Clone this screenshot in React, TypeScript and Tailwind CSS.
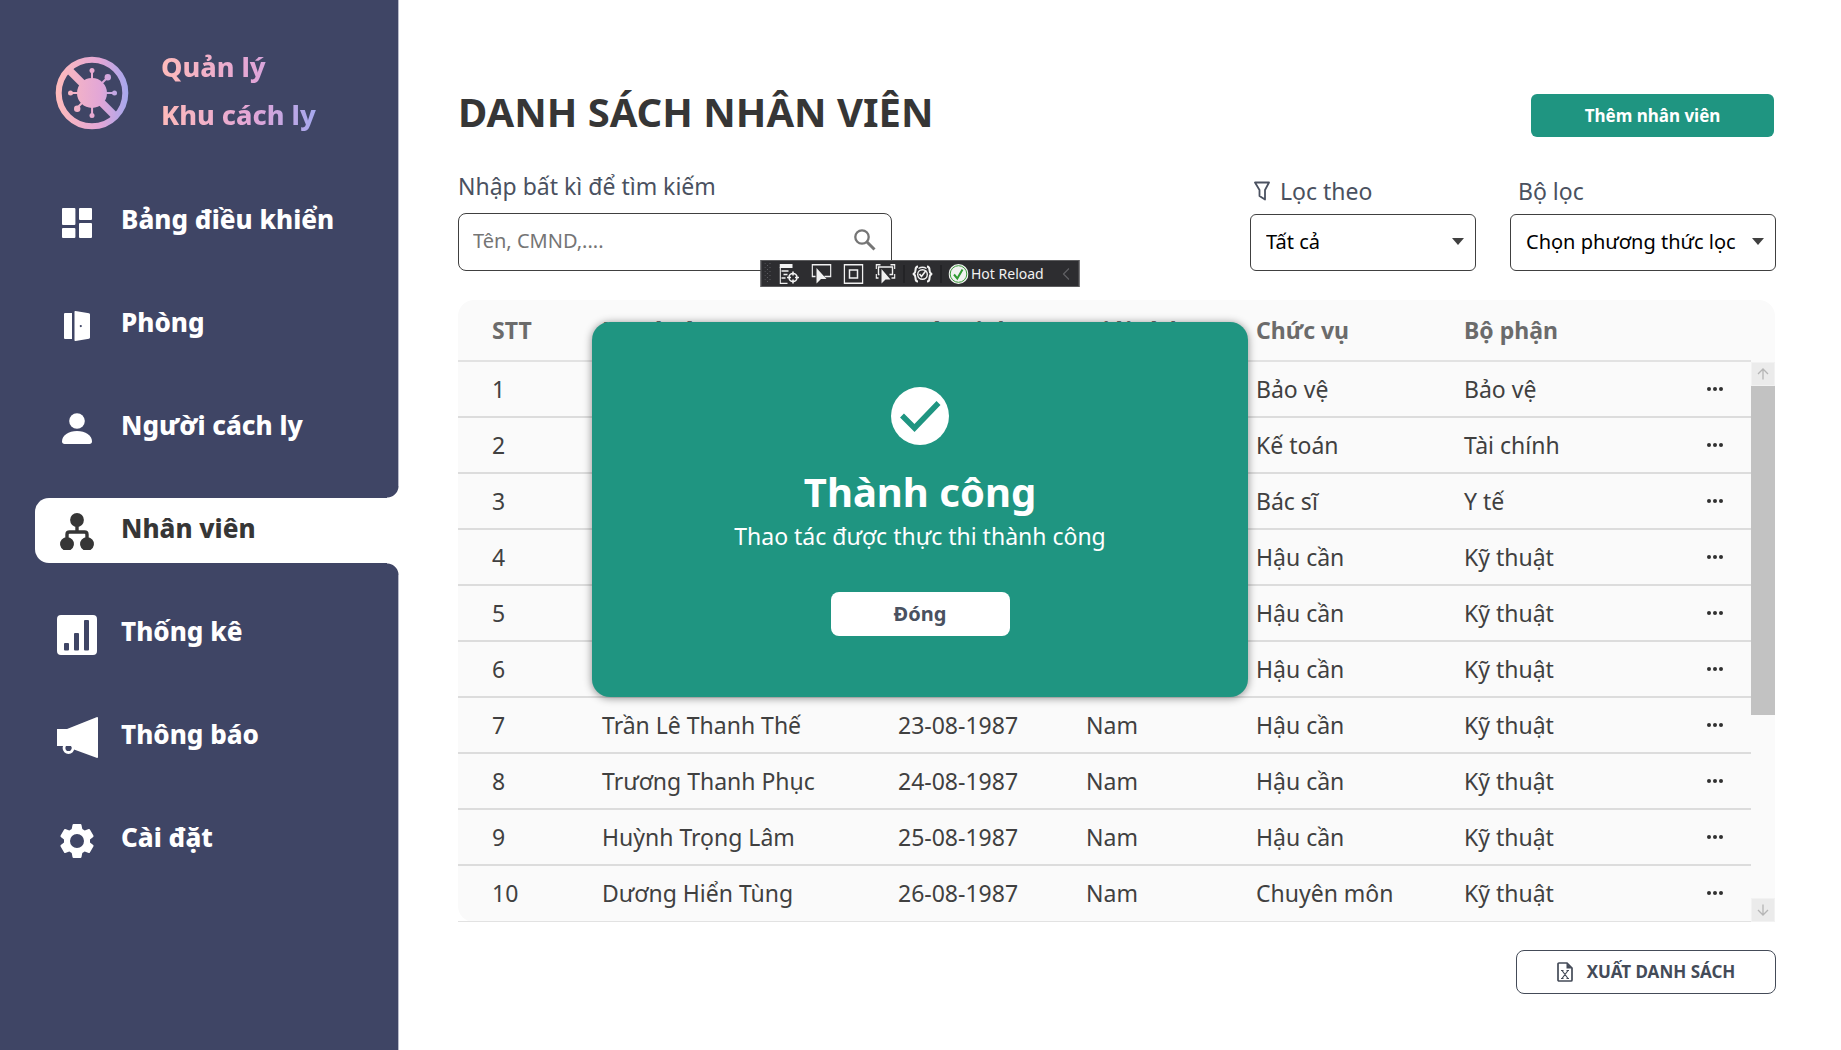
import React from 'react';

type IconProps = { className?: string };

const DashboardIcon = () => (
  <svg viewBox="0 0 30 30" className="h-[30px] w-[30px]" fill="currentColor" aria-hidden="true">
    <rect x="0" y="0" width="13.4" height="17" rx="1" />
    <rect x="17" y="0" width="13" height="12" rx="1" />
    <rect x="0" y="20" width="13.4" height="10" rx="1" />
    <rect x="17" y="15" width="13" height="15" rx="1" />
  </svg>
);

const DoorIcon = () => (
  <svg viewBox="0 0 26 30" className="h-[30px] w-[26px]" fill="currentColor" aria-hidden="true">
    <path d="M1 2h7v26H1a1 1 0 0 1-1-1V3a1 1 0 0 1 1-1z" />
    <path fillRule="evenodd" d="M10.5 0.8q0-.9 1-.7L25 2.3q1 .2 1 1.2v23q0 1-1 1.2L11.500 29.900q-1 .2-1-.7zM16.800 14a1.100 1.100 0 1 0 0 2.200a1.100 1.100 0 0 0 0-2.200z" />
  </svg>
);

const PersonIcon = () => (
  <svg viewBox="0 0 30 31" className="h-[31px] w-[30px]" fill="currentColor" aria-hidden="true">
    <circle cx="15" cy="8" r="7.800" />
    <path d="M15 18c8.500 0 15 4.500 15 10.500 0 1.500-1 2.500-2.500 2.500h-25C1 31 0 30 0 28.500 0 22.500 6.500 18 15 18z" />
  </svg>
);

const SitemapIcon = () => (
  <svg viewBox="0 0 34 37" className="h-[37px] w-[34px]" fill="currentColor" aria-hidden="true">
    <circle cx="17" cy="7" r="6.900" />
    <path d="M7 26v-4.500q0-2.500 2.500-2.500h15q2.500 0 2.500 2.500V26M17 12v7" fill="none" stroke="currentColor" strokeWidth="3.400" />
    <path d="M3.500 37a6.900 6.900 0 1 1 7 0zM23.500 37a6.900 6.900 0 1 1 7 0z" />
  </svg>
);

const ChartIcon = () => (
  <svg viewBox="0 0 40 40" className="h-10 w-10" fill="currentColor" aria-hidden="true">
    <path
      fillRule="evenodd"
      d="M4 0h32a4 4 0 0 1 4 4v32a4 4 0 0 1-4 4H4a4 4 0 0 1-4-4V4a4 4 0 0 1 4-4zM8 28a1 1 0 0 0-1 1v5.500a1 1 0 0 0 1 1h3a1 1 0 0 0 1-1V29a1 1 0 0 0-1-1zM18 18a1 1 0 0 0-1 1v15.500a1 1 0 0 0 1 1h3a1 1 0 0 0 1-1V19a1 1 0 0 0-1-1zM28 5a1 1 0 0 0-1 1v28.500a1 1 0 0 0 1 1h3a1 1 0 0 0 1-1V6a1 1 0 0 0-1-1z"
    />
  </svg>
);

const MegaphoneIcon = () => (
  <svg viewBox="0 0 41 41" className="h-[41px] w-[41px]" fill="currentColor" aria-hidden="true">
    <path d="M0 12h10L39.500.2Q41-.2 41 1v39q0 1.200-1.500.8L17 32.500 16 29H0z" />
    <circle cx="11.500" cy="31" r="4.500" fill="none" stroke="currentColor" strokeWidth="2.800" />
    <path d="M9.200 30.200h5.200a2.600 2.600 0 0 1-2.600 3q-2.200 0-2.600-3z" fill="#3f4565" />
  </svg>
);

const GearIcon = () => (
  <svg viewBox="0 0 34 34" className="h-[34px] w-[34px]" fill="currentColor" aria-hidden="true">
    <path
      fillRule="evenodd"
      d="M13.500 0h7q.8 0 1 .9l.8 4.200 2.400 1.400 4-1.400q.8-.3 1.200.5l3.500 6q.4.800-.2 1.300l-3.200 2.700v2.800l3.200 2.700q.6.500.2 1.300l-3.500 6q-.4.800-1.200.5l-4-1.400-2.400 1.400-.8 4.200q-.2.900-1 .9h-7q-.8 0-1-.9l-.8-4.200-2.400-1.400-4 1.400q-.8.300-1.200-.5l-3.500-6q-.4-.800.2-1.300L4 18.400v-2.800L.8 12.900Q.2 12.400.6 11.600l3.500-6q.4-.800 1.200-.5l4 1.400 2.400-1.400.8-4.200q.2-.9 1-.9zM17 10a7 7 0 1 0 0 14a7 7 0 0 0 0-14z"
    />
  </svg>
);

const LogoIcon = () => (
  <svg viewBox="-37 -37 74 74" className="h-[74px] w-[74px]" aria-hidden="true">
    <defs>
      <linearGradient id="logo-gradient" gradientUnits="userSpaceOnUse" x1="-36" y1="0" x2="36" y2="0">
        <stop offset="0" stopColor="#ffbbbb" />
        <stop offset="0.62" stopColor="#e2a6d7" />
        <stop offset="1" stopColor="#a5a8ee" />
      </linearGradient>
    </defs>
    <g fill="none" stroke="url(#logo-gradient)">
      <circle r="33.300" strokeWidth="6" />
      <path d="M-23-23L23 23" strokeWidth="7.500" />
      <path d="M-22 0H22.100M0-22L.1 22M-15 15L15.500-15.500" strokeWidth="2" />
    </g>
    <g fill="url(#logo-gradient)">
      <circle r="15" />
      <circle cx="-21.500" r="2.500" />
      <circle cx="22.500" r="2.500" />
      <circle cy="-22.500" r="2.500" />
      <circle cy="22.500" r="2.500" />
      <circle cx="15.800" cy="-15.800" r="3.200" />
      <circle cx="-14.800" cy="15.800" r="3.200" />
    </g>
  </svg>
);

const SearchIcon = () => (
  <svg viewBox="0 0 22 22" className="h-[22px] w-[22px]" fill="none" stroke="#757575" aria-hidden="true">
    <circle cx="8" cy="8" r="6.700" strokeWidth="2.300" />
    <path d="M13 13l7.500 7.500" strokeWidth="3" />
  </svg>
);

const FilterIcon = () => (
  <svg viewBox="0 0 16 20" className="h-5 w-4" fill="none" stroke="#4a5160" strokeWidth="1.800" strokeLinejoin="round" aria-hidden="true">
    <path d="M1 1.500h14l-4 7.500v9.500L5.500 15V9z" />
  </svg>
);

const ExcelIcon = () => (
  <svg viewBox="0 0 16 20" className="h-5 w-4" aria-hidden="true">
    <path d="M2 1h8l5 5v12a1 1 0 0 1-1 1H2a1 1 0 0 1-1-1V2a1 1 0 0 1 1-1z" fill="none" stroke="#444b58" strokeWidth="1.700" />
    <path d="M9.500 1v5.500H15z" fill="#444b58" />
    <path d="M5 8.500L11 16.500M11 8.500L5 16.500M4 8.500h2.500M9.500 8.500H12M4 16.500h2.500M9.500 16.500H12" stroke="#444b58" strokeWidth="1.200" />
  </svg>
);

const ArrowIcon = ({ className }: IconProps) => (
  <svg viewBox="0 0 12 12" className={className} fill="none" stroke="#b5b5b5" strokeWidth="1.300" aria-hidden="true">
    <path d="M6 11.500V1M1 6l5-5 5 5" />
  </svg>
);

const menu = [
  { label: 'Bảng điều khiển', Icon: DashboardIcon },
  { label: 'Phòng', Icon: DoorIcon },
  { label: 'Người cách ly', Icon: PersonIcon },
  { label: 'Nhân viên', Icon: SitemapIcon, active: true },
  { label: 'Thống kê', Icon: ChartIcon },
  { label: 'Thông báo', Icon: MegaphoneIcon },
  { label: 'Cài đặt', Icon: GearIcon },
];

const headings = ['STT', 'Họ và tên', 'Ngày sinh', 'Giới tính', 'Chức vụ', 'Bộ phận'];

const rows = [
  ['1', '', '', '', 'Bảo vệ', 'Bảo vệ'],
  ['2', '', '', '', 'Kế toán', 'Tài chính'],
  ['3', '', '', '', 'Bác sĩ', 'Y tế'],
  ['4', '', '', '', 'Hậu cần', 'Kỹ thuật'],
  ['5', '', '', '', 'Hậu cần', 'Kỹ thuật'],
  ['6', '', '', '', 'Hậu cần', 'Kỹ thuật'],
  ['7', 'Trần Lê Thanh Thế', '23-08-1987', 'Nam', 'Hậu cần', 'Kỹ thuật'],
  ['8', 'Trương Thanh Phục', '24-08-1987', 'Nam', 'Hậu cần', 'Kỹ thuật'],
  ['9', 'Huỳnh Trọng Lâm', '25-08-1987', 'Nam', 'Hậu cần', 'Kỹ thuật'],
  ['10', 'Dương Hiển Tùng', '26-08-1987', 'Nam', 'Chuyên môn', 'Kỹ thuật'],
];

function Sidebar() {
  return (
    <aside className="w-[399px] shrink-0 border-r border-[#b9bbca] bg-[#3f4565] pt-[45px]">
      <div className="flex h-24 items-center pl-[55px]">
        <LogoIcon />
        <p className="ml-8 bg-[linear-gradient(90deg,#ffbbbb,#e2a6d7_60%,#a5a8ee)] bg-clip-text pb-1 text-[27px] leading-[48px] font-extrabold text-transparent">
          Quản lý
          <br />
          Khu cách ly
        </p>
      </div>
      <nav className="-mr-px mt-12 flex flex-col gap-[38px] pl-[35px]">
        {menu.map(({ label, Icon, active }) => (
          <a
            key={label}
            href="#"
            aria-current={active ? 'page' : undefined}
            className={
              active
                ? 'relative flex h-[65px] items-center rounded-l-[14px] bg-white text-[#363636]'
                : 'flex h-[65px] items-center text-white'
            }
          >
            {active && (
              <>
                <span className="absolute -top-3 right-0 h-3 w-3 bg-[radial-gradient(circle_at_0_0,#3f4565_11px,#fff_12px)]" />
                <span className="absolute right-0 -bottom-3 h-3 w-3 bg-[radial-gradient(circle_at_0_100%,#3f4565_11px,#fff_12px)]" />
              </>
            )}
            <span className="flex w-[84px] justify-center pt-0.5">
              <Icon />
            </span>
            <span className="ml-0.5 pb-1.5 text-[26px] leading-8 font-extrabold">{label}</span>
          </a>
        ))}
      </nav>
    </aside>
  );
}

function FilterSelect({ id, label, option, icon, className }: { id: string; label: string; option: string; icon?: React.ReactNode; className: string }) {
  return (
    <div className={className}>
      <label
        htmlFor={id}
        className={icon ? 'flex items-center gap-2.5 pl-1 text-[23px] leading-8 text-[#4a5160]' : 'block pl-2 text-[23px] leading-8 text-[#4a5160]'}
      >
        {icon}
        {label}
      </label>
      <div className="relative mt-[7px]">
        <select id={id} className="h-[57px] w-full appearance-none rounded-md border border-[#404040] bg-white pb-0.5 pl-[15px] text-xl text-black">
          <option>{option}</option>
        </select>
        <svg viewBox="0 0 12 7" className="pointer-events-none absolute top-6 right-3 h-[7px] w-3" fill="#404040" aria-hidden="true">
          <path d="M0 0h12L6 7z" />
        </svg>
      </div>
    </div>
  );
}

function DebugToolbar() {
  return (
    <div className="absolute top-[260px] left-1/2 -ml-px flex h-[27px] w-[319px] -translate-x-1/2 items-center border border-[#5c5c5e] bg-[#2d2d30] pl-[3px] text-[#f1f1f1]">
      <svg viewBox="0 0 7 21" className="h-[21px] w-[7px] shrink-0" fill="#5c5c60" aria-hidden="true">
        {[0, 4, 8, 12, 16].map((y) => (
          <g key={y}>
            <rect x="0" y={y} width="1" height="1" />
            <rect x="5" y={y} width="1" height="1" />
            <rect x="2.500" y={y + 2} width="1" height="1" />
          </g>
        ))}
      </svg>
      <div className="ml-2 flex gap-3">
        <button type="button" aria-label="Live Visual Tree">
          <svg viewBox="0 0 20 20" className="h-5 w-5" fill="none" stroke="currentColor" strokeWidth="1.300">
            <path d="M0 2h13" strokeWidth="4" />
            <path d="M.7 3v16.300H8M2 7h7M4 10.500h4M2 14h4" />
            <circle cx="13.500" cy="13.500" r="4" strokeWidth="1.600" />
            <path d="M13.500 7.500v4M13.500 15.500v4M7.500 13.500h4M15.500 13.500h4" strokeWidth="1.600" />
          </svg>
        </button>
        <button type="button" aria-label="Select Element">
          <svg viewBox="0 0 20 20" className="h-5 w-5" fill="none" stroke="currentColor" strokeWidth="1.400">
            <path d="M4 12.500H.7V.7h18.600v11.800H13" />
            <path d="M5 4v15.500l4.500-4.500H15z" fill="currentColor" stroke="none" />
          </svg>
        </button>
        <button type="button" aria-label="Display Layout Adorners">
          <svg viewBox="0 0 20 20" className="h-5 w-5" fill="none" stroke="currentColor" strokeWidth="1.500">
            <path d="M.8.8h18.400v18.400H.8z" />
            <path d="M6 6h8v8H6z" />
          </svg>
        </button>
        <button type="button" aria-label="Track Focused Element">
          <svg viewBox="0 0 20 20" className="h-5 w-5" fill="none" stroke="currentColor" strokeWidth="1.400">
            <path d="M.7 5V.7H5M15 .7h4.300V5M.7 10v4H3M19.300 10v4H16M4 10.500H3V3h14v7.500h-3" />
            <path d="M6 5v14.500l4-4h5z" fill="currentColor" stroke="none" />
          </svg>
        </button>
      </div>
      <span className="ml-2 h-[18px] w-px bg-[#1b1b1d]" />
      <button type="button" aria-label="Binding Failures" className="ml-2">
        <svg viewBox="0 0 20 20" className="h-5 w-5" fill="none" stroke="currentColor" strokeWidth="2">
          <path d="M5.500 2.500C3 2.500 3 4 3 6s0 3-2 4c2 1 2 2 2 4s0 3.500 2.500 3.500M14.500 2.500C17 2.500 17 4 17 6s0 3 2 4c-2 1-2 2-2 4s0 3.500-2.500 3.500" />
          <circle cx="10" cy="10.500" r="4.800" strokeWidth="1.400" />
          <path d="M7 10l2 2.500L13.500 6.500" strokeWidth="1.600" />
          <path d="M6 4.500Q10 2 14 4.500" strokeWidth="1.300" />
        </svg>
      </button>
      <span className="ml-2 h-[18px] w-px bg-[#1b1b1d]" />
      <button type="button" className="ml-[7px] flex items-center gap-[3px] text-sm leading-5 whitespace-nowrap">
        <svg viewBox="0 0 20 20" className="h-5 w-5" fill="none" aria-hidden="true">
          <circle cx="10" cy="10" r="10" fill="#f1f1f1" />
          <circle cx="10" cy="10" r="8.300" stroke="#3a9b3a" strokeWidth="1" />
          <path d="M5.500 10.500l3.300 4L14 5.500" stroke="#2f9a32" strokeWidth="2" />
        </svg>
        Hot Reload
      </button>
      <svg viewBox="0 0 7 12" className="mr-[9px] ml-auto h-3 w-[7px]" fill="none" stroke="#5f5f63" strokeWidth="1.300" aria-hidden="true">
        <path d="M6.500.5L1 6l5.500 5.500" />
      </svg>
    </div>
  );
}

function SuccessDialog() {
  return (
    <div className="pointer-events-none absolute inset-0 flex items-start justify-center pt-[322px] pr-px">
      <section
        role="dialog"
        aria-labelledby="dialog-title"
        className="pointer-events-auto flex h-[375px] w-[656px] flex-col items-center rounded-[18px] bg-[#1f9581] pt-[65px] text-white shadow-[0_1px_8px_rgba(0,0,0,0.45)]"
      >
        <svg viewBox="0 0 58 58" className="h-[58px] w-[58px]" aria-hidden="true">
          <circle cx="29" cy="29" r="29" fill="#fff" />
          <path d="M11 28.500L23.500 41 47.500 16" fill="none" stroke="#1f9581" strokeWidth="5.500" />
        </svg>
        <h2 id="dialog-title" className="mt-[23px] text-[40px] leading-[48px] font-bold">
          Thành công
        </h2>
        <p className="mt-1 text-[23px] leading-8">Thao tác được thực thi thành công</p>
        <button type="button" className="mt-10 h-11 w-[179px] rounded-lg bg-white text-xl font-bold text-[#4a5160]">
          Đóng
        </button>
      </section>
    </div>
  );
}

export default function App() {
  return (
    <div className="relative flex min-h-screen bg-white font-['Noto_Sans',sans-serif]">
      <Sidebar />
      <main className="flex min-w-0 flex-1 flex-col pt-[87px] pr-[65px] pb-10 pl-[59px]">
        <header className="flex items-end justify-between">
          <h1 className="text-[40px] leading-[50px] font-bold text-[#363636]">DANH SÁCH NHÂN VIÊN</h1>
          <button type="button" className="mr-0.5 h-[43px] w-[243px] rounded-md bg-[#1f9581] text-[17px] font-bold text-white">
            Thêm nhân viên
          </button>
        </header>

        <div className="mt-[33px] flex items-end">
          <div className="w-[434px]">
            <label htmlFor="search" className="block text-[23px] leading-8 text-[#4a5160]">
              Nhập bất kì để tìm kiếm
            </label>
            <div className="mt-[11px] flex h-[58px] items-center rounded-lg border border-[#404040] pr-[15px] pb-1">
              <input id="search" type="text" placeholder="Tên, CMND,...." className="h-full min-w-0 flex-1 bg-transparent pl-3.5 text-xl outline-none placeholder:text-[#757575]" />
              <button type="button" aria-label="Tìm kiếm">
                <SearchIcon />
              </button>
            </div>
          </div>
          <FilterSelect id="filter-by" label="Lọc theo" option="Tất cả" icon={<FilterIcon />} className="ml-auto w-[226px]" />
          <FilterSelect id="filter-set" label="Bộ lọc" option="Chọn phương thức lọc" className="ml-[34px] w-[266px]" />
        </div>

        <div className="mt-[29px] mr-px flex rounded-t-2xl rounded-bl-2xl bg-[#fafafa]">
          <table className="min-w-0 flex-1 table-fixed border-collapse text-left text-[23px] leading-8 text-[#404040]">
            <colgroup>
              <col className="w-36" />
              <col className="w-[296px]" />
              <col className="w-[188px]" />
              <col className="w-[170px]" />
              <col className="w-52" />
              <col />
              <col className="w-[100px]" />
            </colgroup>
            <thead>
              <tr className="h-[61px] border-b-2 border-[#e2e2e2] text-[#6b6b6b]">
                {headings.map((heading, i) => (
                  <th key={heading} scope="col" className={i === 0 ? 'pl-[34px] font-bold' : 'font-bold'}>
                    {heading}
                  </th>
                ))}
                <td />
              </tr>
            </thead>
            <tbody>
              {rows.map((row) => (
                <tr key={row[0]} className="h-14 border-b-2 border-[#dcdcdc] last:border-b last:border-[#e2e2e2]">
                  {row.map((cell, i) => (
                    <td key={i} className={i === 0 ? 'pl-[34px]' : ''}>
                      {cell}
                    </td>
                  ))}
                  <td className="pr-7 text-right">
                    <button type="button" aria-label="Tùy chọn" className="inline-flex h-6 w-4 items-center pb-1.5 align-middle">
                      <svg viewBox="0 0 16 4" className="h-1 w-4" fill="#303030" aria-hidden="true">
                        <circle cx="2" cy="2" r="2" />
                        <circle cx="8" cy="2" r="2" />
                        <circle cx="14" cy="2" r="2" />
                      </svg>
                    </button>
                  </td>
                </tr>
              ))}
            </tbody>
          </table>
          <div className="mt-[62px] flex w-6 shrink-0 flex-col">
            <span className="flex h-6 items-center justify-center border border-[#f2f2f2] bg-[#ebebeb]">
              <ArrowIcon className="h-3 w-3" />
            </span>
            <span className="h-[329px] bg-[#c2c2c2]" />
            <span className="mt-auto flex h-6 items-center justify-center border border-[#f2f2f2] bg-[#ebebeb]">
              <ArrowIcon className="h-3 w-3 rotate-180" />
            </span>
          </div>
        </div>

        <button type="button" className="mt-7 flex h-11 w-[260px] items-center justify-center gap-3.5 self-end rounded-lg border border-[#444b58] text-[17px] font-bold text-[#444b58]">
          <ExcelIcon />
          XUẤT DANH SÁCH
        </button>
      </main>
      <SuccessDialog />
      <DebugToolbar />
    </div>
  );
}
